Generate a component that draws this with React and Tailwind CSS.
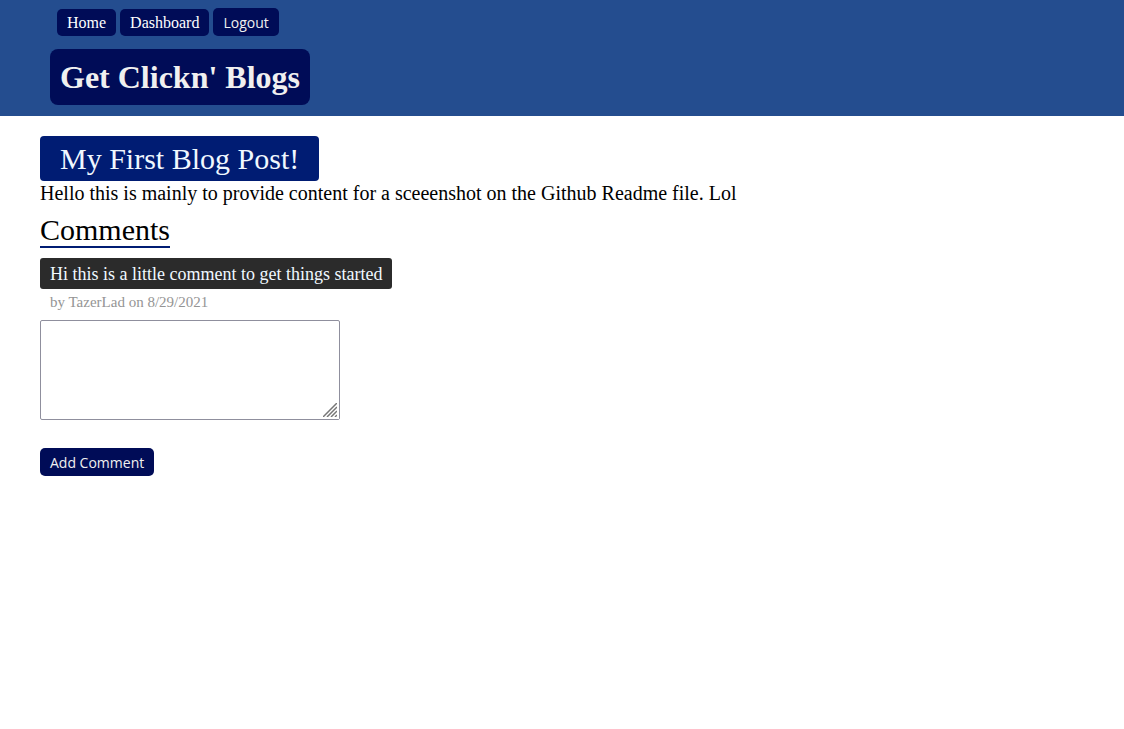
export default function App() {
  return (
    <div className="font-['Liberation_Serif',serif] text-black">
      <header className="bg-[#244d8f] px-[50px] pt-2 pb-[11px]">
        <nav className="flex items-end gap-1 pl-[7px] text-base">
          <a href="#home" className="rounded-[5px] bg-[#000c57] px-2.5 py-1 leading-[19px] text-white">Home</a>
          <a href="#dashboard" className="rounded-[5px] bg-[#000c57] px-2.5 py-1 leading-[19px] text-white">Dashboard</a>
          <button type="button" className="h-7 rounded-[5px] bg-[#000c57] px-2.5 pt-0.5 font-['Open_Sans',sans-serif] text-sm text-[#f0f0f0]">Logout</button>
        </nav>
        <h1 className="mt-[13px] w-fit rounded-lg bg-[#000c57] px-2.5 py-2.5 text-[32px] leading-9 font-bold text-[#f0f0f0]">Get Clickn' Blogs</h1>
      </header>
      <main className="px-10 pt-5">
        <h2 className="w-fit rounded bg-[#001c73] px-5 py-1 text-[30px] leading-[37px] text-[#f0f8ff]">My First Blog Post!</h2>
        <p className="text-xl leading-[25px]">Hello this is mainly to provide content for a sceeenshot on the Github Readme file. Lol</p>
        <label htmlFor="comment" className="mt-2 block w-fit border-b-2 border-[#001c73] text-[30px] leading-8">Comments</label>
        <p className="mt-2.5 w-fit rounded-[3px] bg-[#2b2b2b] px-2.5 pt-[5px] pb-[3px] text-lg leading-[23px] text-[#f0f8ff]">Hi this is a little comment to get things started</p>
        <p className="mt-1 ml-2.5 text-[15px] leading-[18px] text-[#949494]">by TazerLad on 8/29/2021</p>
        <div className="relative mt-[9px] w-fit">
          <textarea id="comment" className="block h-[100px] w-[300px] rounded-[2px] border border-[#8f8f9d] bg-white p-1 [&::-webkit-resizer]:bg-white" />
          <svg aria-hidden="true" viewBox="0 0 14 14" className="pointer-events-none absolute right-[3px] bottom-[3px] h-3.5 w-3.5" fill="none" stroke="#777777" strokeWidth="1.5">
            <path d="M0 14 14 0M4 14 14 4M8 14l6-6M12 14l2-2" />
          </svg>
        </div>
        <button type="button" className="mt-7 h-7 rounded-[5px] bg-[#000c57] px-2.5 pt-0.5 font-['Open_Sans',sans-serif] text-sm text-[#f0f0f0]">Add Comment</button>
      </main>
    </div>
  );
}
